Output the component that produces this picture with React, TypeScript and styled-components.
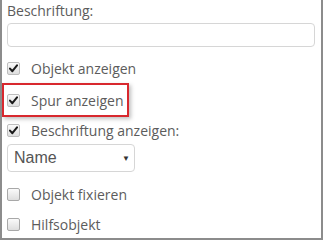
import React, { useState } from 'react';
import styled, { createGlobalStyle } from 'styled-components';

const GlobalStyle = createGlobalStyle`
  html, body {
    margin: 0;
    padding: 0;
    background: #ffffff;
  }
`;

const Panel = styled.div`
  box-sizing: border-box;
  width: 323px;
  height: 240px;
  border: 2px solid #8c8c8c;
  border-top: none;
  padding: 0 6px 0 5px;
  display: flex;
  flex-direction: column;
  font-family: 'Open Sans', 'Liberation Sans', sans-serif;
  font-size: 14px;
  color: #5c5c5c;
  background: #fff;
  overflow: hidden;

  & > * {
    flex-shrink: 0;
  }
`;

const FieldLabel = styled.div`
  line-height: 20px;
  margin-top: 1px;
  height: 22px;
`;

const TextInput = styled.input`
  box-sizing: border-box;
  width: 308px;
  height: 24px;
  border: 1px solid #d6d6d6;
  border-radius: 4px;
  padding: 0 6px;
  font: inherit;
  outline: none;
  margin-bottom: 5px;
`;

const Row = styled.label<{ h: number }>`
  position: relative;
  display: flex;
  align-items: center;
  gap: 11px;
  height: ${p => p.h}px;
  cursor: pointer;
`;

const Box = styled.span<{ checked: boolean }>`
  box-sizing: border-box;
  width: 13px;
  height: 13px;
  flex-shrink: 0;
  border: 1px solid ${p => (p.checked ? '#bdbdbd' : '#a8a8a8')};
  border-radius: 2px;
  background: linear-gradient(#fafafa, #dedede);
  display: flex;
  align-items: center;
  justify-content: center;
`;

const Highlight = styled.span`
  position: absolute;
  left: -5px;
  top: -1px;
  width: 127px;
  height: 34px;
  box-sizing: border-box;
  border: 2px solid #d8282e;
  box-shadow: 2px 2px 4px rgba(0, 0, 0, 0.25);
  pointer-events: none;
`;

const SelectBox = styled.div`
  box-sizing: border-box;
  width: 128px;
  height: 28px;
  border: 1px solid #d6d6d6;
  border-radius: 4px;
  display: flex;
  align-items: center;
  justify-content: space-between;
  padding: 0 4px 0 6px;
  font-family: 'Liberation Sans', Arial, sans-serif;
  font-size: 16px;
  color: #555;
  margin-bottom: 7px;
`;

const Arrow = styled.span`
  font-size: 8px;
  color: #333;
`;

const Check = () => (
  <svg width="9" height="9" viewBox="0 0 9 9">
    <path d="M1 4.6 L3.4 7.2 L8 1.4" fill="none" stroke="#1a1a1a" strokeWidth="2" strokeLinecap="round" strokeLinejoin="round" />
  </svg>
);

const CheckRow: React.FC<{ label: string; initial: boolean; h: number; marked?: boolean }> = ({ label, initial, h, marked }) => {
  const [checked, setChecked] = useState(initial);
  return (
    <Row h={h} onClick={() => setChecked(!checked)}>
      <Box checked={checked}>{checked && <Check />}</Box>
      <span>{label}</span>
      {marked && <Highlight />}
    </Row>
  );
};

export default function App() {
  return (
    <>
      <GlobalStyle />
      <Panel>
        <FieldLabel>Beschriftung:</FieldLabel>
        <TextInput type="text" />
        <CheckRow label="Objekt anzeigen" initial h={32} />
        <CheckRow label="Spur anzeigen" initial h={32} marked />
        <CheckRow label="Beschriftung anzeigen:" initial h={28} />
        <SelectBox>
          <span>Name</span>
          <Arrow>▼</Arrow>
        </SelectBox>
        <CheckRow label="Objekt fixieren" initial={false} h={31} />
        <CheckRow label="Hilfsobjekt" initial={false} h={28} />
      </Panel>
    </>
  );
}
